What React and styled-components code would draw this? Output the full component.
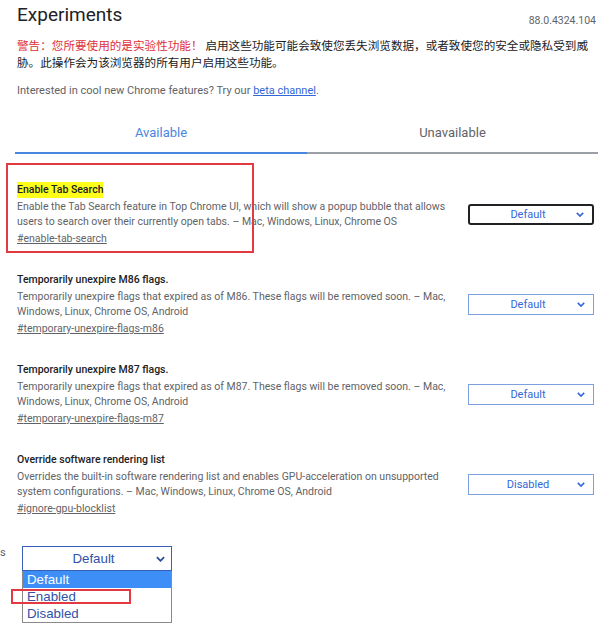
import styled, { createGlobalStyle } from 'styled-components';

const flags = [
  {
    name: 'Enable Tab Search',
    desc: 'Enable the Tab Search feature in Top Chrome UI, which will show a popup bubble that allows users to search over their currently open tabs. – Mac, Windows, Linux, Chrome OS',
    id: 'enable-tab-search',
    value: 'Default',
    marked: true,
  },
  {
    name: 'Temporarily unexpire M86 flags.',
    desc: 'Temporarily unexpire flags that expired as of M86. These flags will be removed soon. – Mac, Windows, Linux, Chrome OS, Android',
    id: 'temporary-unexpire-flags-m86',
    value: 'Default',
  },
  {
    name: 'Temporarily unexpire M87 flags.',
    desc: 'Temporarily unexpire flags that expired as of M87. These flags will be removed soon. – Mac, Windows, Linux, Chrome OS, Android',
    id: 'temporary-unexpire-flags-m87',
    value: 'Default',
  },
  {
    name: 'Override software rendering list',
    desc: 'Overrides the built-in software rendering list and enables GPU-acceleration on unsupported system configurations. – Mac, Windows, Linux, Chrome OS, Android',
    id: 'ignore-gpu-blocklist',
    value: 'Disabled',
  },
];

function Chevron({ color }) {
  return (
    <ChevronIcon viewBox="0 0 10 6" color={color}>
      <path d="M1 1l4 4 4-4" fill="none" stroke="currentColor" strokeWidth="2" />
    </ChevronIcon>
  );
}

function App() {
  return (
    <Page>
      <GlobalStyle />
      <Header>
        <Title>Experiments</Title>
        <Version>88.0.4324.104</Version>
      </Header>
      <Warning>
        <Danger>警告：您所要使用的是实验性功能！</Danger> 启用这些功能可能会致使您丢失浏览数据，或者致使您的安全或隐私受到威胁。此操作会为该浏览器的所有用户启用这些功能。
      </Warning>
      <Promo>
        Interested in cool new Chrome features? Try our <PromoLink>beta channel</PromoLink>.
      </Promo>

      <Tabs>
        <Tab active>Available</Tab>
        <Tab>Unavailable</Tab>
      </Tabs>

      <FlagList>
        {flags.map((f) => (
          <Flag key={f.id}>
            <FlagText>
              <FlagName marked={f.marked}>{f.name}</FlagName>
              <FlagDesc>{f.desc}</FlagDesc>
              <FlagLink>#{f.id}</FlagLink>
              {f.marked && <RedBox />}
            </FlagText>
            <FlagSelect focused={f.marked}>
              <span>{f.value}</span>
              <Chevron color="#3367d6" />
            </FlagSelect>
          </Flag>
        ))}
      </FlagList>

      <DemoRow>
        <Stub>s</Stub>
        <Demo>
          <DemoSelect>
            <span>Default</span>
            <Chevron color="#2a4b9b" />
          </DemoSelect>
          <DemoList>
            <DemoOption selected>Default</DemoOption>
            <DemoOption>
              Enabled
              <OptionMark />
            </DemoOption>
            <DemoOption>Disabled</DemoOption>
          </DemoList>
        </Demo>
      </DemoRow>
    </Page>
  );
}

const GlobalStyle = createGlobalStyle`
  body {
    margin: 0;
    background: #fff;
    font-family: Roboto, "Noto Sans CJK SC", sans-serif;
  }
`;

const Page = styled.div`
  width: 613px;
  height: 628px;
  overflow: hidden;
  box-sizing: border-box;
  padding: 4px 16px 0 17px;
`;

const Header = styled.div`
  display: flex;
  justify-content: space-between;
  align-items: flex-end;
`;

const Title = styled.h1`
  margin: 0;
  font-size: 19px;
  line-height: 22px;
  font-weight: 400;
  color: #202124;
`;

const Version = styled.div`
  font-size: 10.5px;
  line-height: 14px;
  color: #5f6368;
  margin: 0 1px -2px 0;
`;

const Warning = styled.p`
  margin: 12px 0 0;
  font-family: Roboto, "Noto Sans CJK SC", sans-serif;
  font-size: 11.6px;
  line-height: 17px;
  color: #202124;
`;

const Danger = styled.span`
  color: #e0303a;
`;

const Promo = styled.p`
  margin: 11px 0 0;
  font-size: 11px;
  line-height: 15px;
  color: #5f6368;
`;

const PromoLink = styled.a`
  color: #3367d6;
  text-decoration: underline;
`;

const Tabs = styled.div`
  display: flex;
  margin: 15px -1px 0 -2px;
`;

const Tab = styled.div`
  flex: ${(p) => (p.active ? '0 0 292px' : '1')};
  text-align: center;
  font-size: 13px;
  line-height: 17px;
  padding: 11px 0 11px;
  color: ${(p) => (p.active ? '#4a86e0' : '#5f6368')};
  border-bottom: ${(p) => (p.active ? '2px solid #4a86e0' : '2px solid #9aa0a6')};
`;

const FlagList = styled.div`
  display: flex;
  flex-direction: column;
  gap: 26px;
  margin-top: 28px;
`;

const Flag = styled.div`
  display: flex;
  align-items: center;
  justify-content: space-between;
`;

const FlagText = styled.div`
  position: relative;
  width: 444px;
  font-size: 10.5px;
`;

const FlagName = styled.div`
  display: inline-block;
  font-weight: 500;
  line-height: 16px;
  color: #202124;
  background: ${(p) => (p.marked ? '#ffff1a' : 'transparent')};
  margin-bottom: 1px;
`;

const FlagDesc = styled.div`
  line-height: 15px;
  color: #5f6368;
`;

const FlagLink = styled.a`
  display: block;
  margin-top: 2px;
  line-height: 15px;
  color: #5f6368;
  text-decoration: underline;
`;

const RedBox = styled.div`
  position: absolute;
  left: -11px;
  top: -19px;
  width: 244px;
  height: 86px;
  border: 2px solid #e23a40;
`;

const FlagSelect = styled.div`
  box-sizing: border-box;
  width: 126px;
  height: 21px;
  margin-right: 3px;
  display: flex;
  align-items: center;
  padding: 0 8px 0 10px;
  border: ${(p) => (p.focused ? '2px solid #202124' : '1px solid #7c9fe0')};
  border-radius: ${(p) => (p.focused ? '3px' : '0')};
  color: #3367d6;
  font-size: 11px;

  span {
    flex: 1;
    text-align: center;
  }
`;

const ChevronIcon = styled.svg`
  width: 8px;
  height: 5px;
  color: ${(p) => p.color};
`;

const DemoRow = styled.div`
  display: flex;
  align-items: flex-start;
  margin: 30px 0 0 -17px;
`;

const Stub = styled.div`
  width: 22px;
  font-size: 11px;
  line-height: 13px;
  color: #5f6368;
`;

const Demo = styled.div`
  width: 150px;
  font-family: "Liberation Sans", Arial, sans-serif;
  font-size: 13.3px;
`;

const DemoSelect = styled.div`
  box-sizing: border-box;
  height: 25px;
  display: flex;
  align-items: center;
  padding: 0 6px 0 8px;
  border: 1px solid #3a5fb7;
  color: #2f52a8;

  span {
    flex: 1;
    text-align: center;
  }

  svg {
    width: 9px;
    height: 6px;
  }
`;

const DemoList = styled.div`
  border: 1px solid #8a8a8a;
  border-top: none;
`;

const DemoOption = styled.div`
  position: relative;
  height: 17px;
  line-height: 17px;
  padding-left: 4px;
  color: ${(p) => (p.selected ? '#fff' : '#2f52a8')};
  background: ${(p) => (p.selected ? '#3d8ef7' : 'transparent')};
`;

const OptionMark = styled.div`
  position: absolute;
  left: -12px;
  top: 1px;
  width: 116px;
  height: 11px;
  border: 2px solid #e23a40;
`;

export default App;
